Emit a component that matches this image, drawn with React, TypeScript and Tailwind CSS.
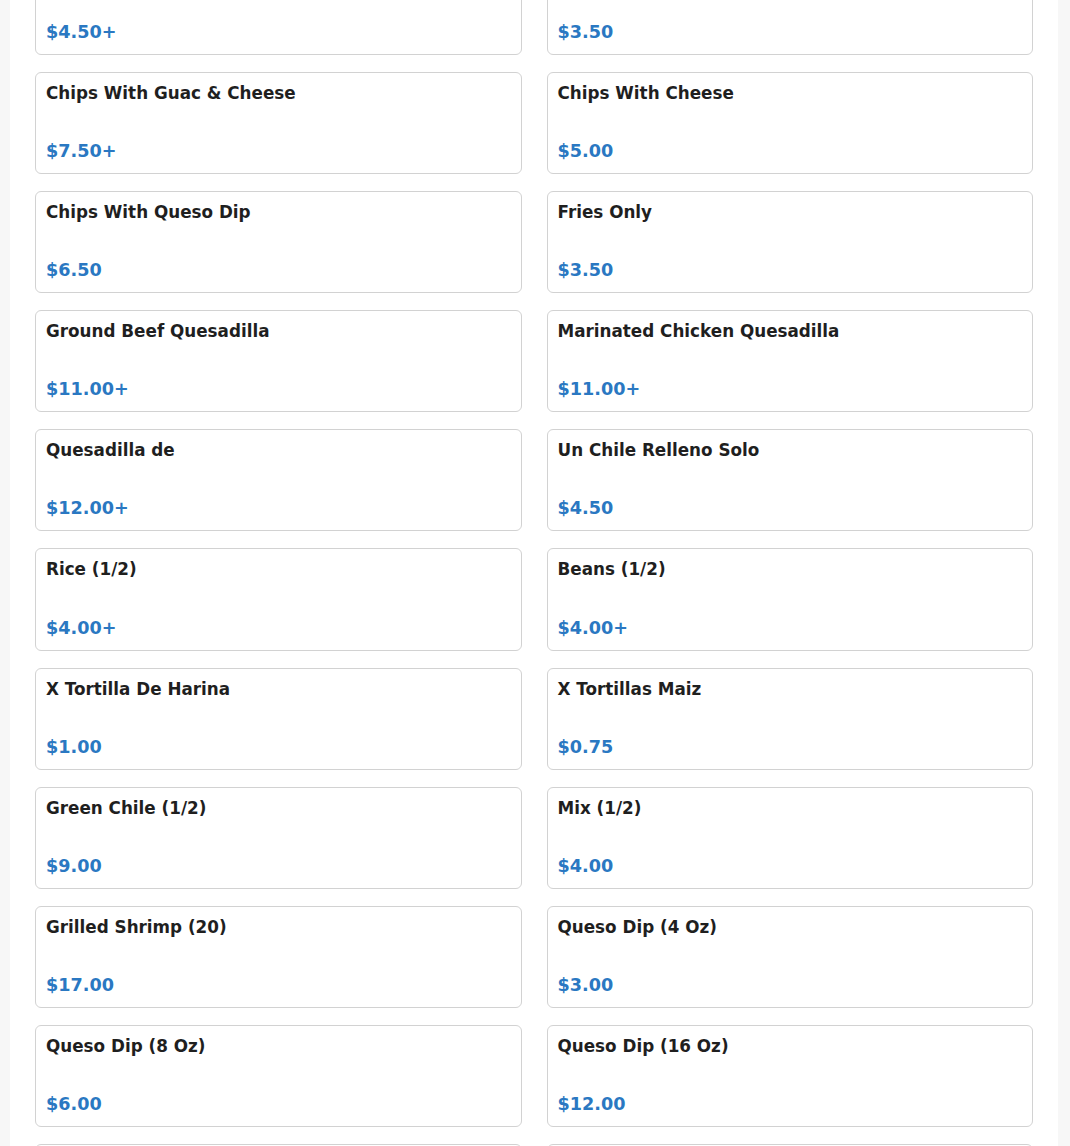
import React from "react";

const items: [string, string][] = [
  ["Chips With Guacamole", "$4.50+"],
  ["Chips Only", "$3.50"],
  ["Chips With Guac & Cheese", "$7.50+"],
  ["Chips With Cheese", "$5.00"],
  ["Chips With Queso Dip", "$6.50"],
  ["Fries Only", "$3.50"],
  ["Ground Beef Quesadilla", "$11.00+"],
  ["Marinated Chicken Quesadilla", "$11.00+"],
  ["Quesadilla de", "$12.00+"],
  ["Un Chile Relleno Solo", "$4.50"],
  ["Rice (1/2)", "$4.00+"],
  ["Beans (1/2)", "$4.00+"],
  ["X Tortilla De Harina", "$1.00"],
  ["X Tortillas Maiz", "$0.75"],
  ["Green Chile (1/2)", "$9.00"],
  ["Mix (1/2)", "$4.00"],
  ["Grilled Shrimp (20)", "$17.00"],
  ["Queso Dip (4 Oz)", "$3.00"],
  ["Queso Dip (8 Oz)", "$6.00"],
  ["Queso Dip (16 Oz)", "$12.00"],
  ["Queso Dip (32 Oz)", "$22.00"],
  ["Sour Cream (4 Oz)", "$1.50"],
];

export default function App() {
  return (
    <div
      className="min-h-screen bg-[#f7f7f7] overflow-hidden"
      style={{ fontFamily: '"DejaVu Sans", sans-serif' }}
    >
      <div className="ml-[10px] mr-[12px] h-[1146px] overflow-hidden bg-white px-[25px]">
        <div className="mt-[-47px] grid grid-cols-2 gap-x-[25px] gap-y-[17px]">
          {items.map(([name, price], i) => (
            <div
              key={i}
              className="flex h-[102.1px] flex-col justify-between rounded-[6px] border border-[#d2d2d2] bg-white px-[10px] pt-[10px] pb-[11px]"
            >
              <div className="text-[16.8px] font-bold leading-[21px] text-[#1f1f1f]">
                {name}
              </div>
              <div className="text-[17.6px] font-bold leading-[22px] text-[#2a78c2]">
                {price}
              </div>
            </div>
          ))}
        </div>
      </div>
    </div>
  );
}
